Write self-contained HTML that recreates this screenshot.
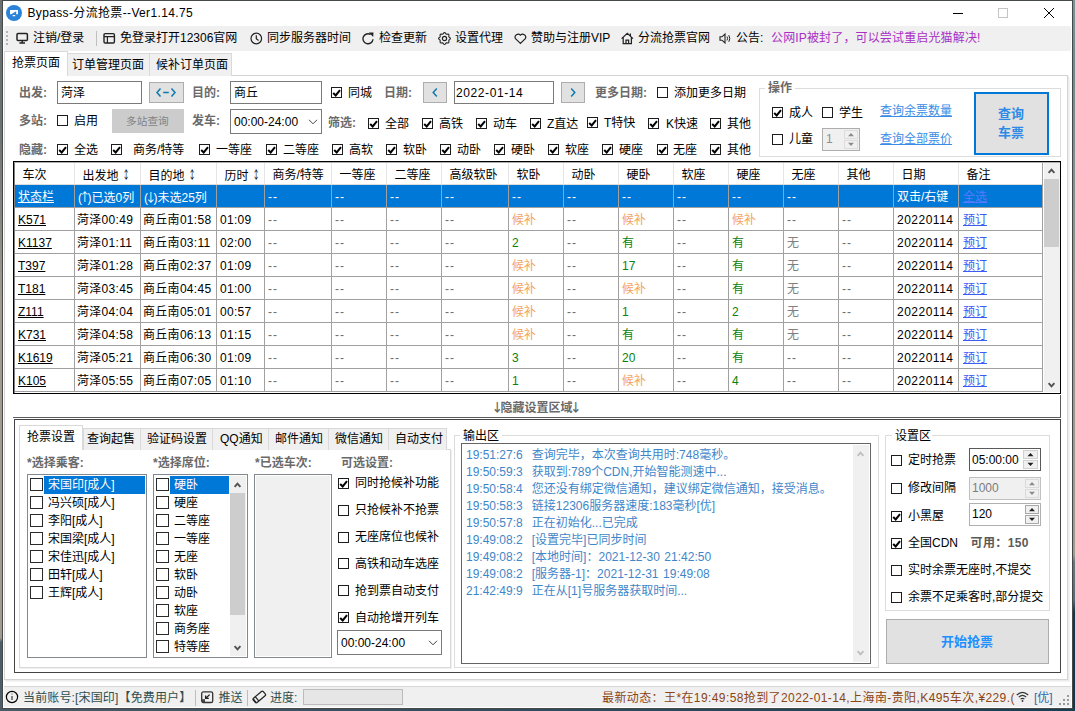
<!DOCTYPE html>
<html lang="zh-CN"><head><meta charset="utf-8"><title>Bypass-分流抢票--Ver1.14.75</title>
<style>
html,body{margin:0;padding:0}
body{width:1075px;height:711px;overflow:hidden;position:relative;font:12px/16px "Liberation Sans","Noto Sans CJK SC",sans-serif;color:#000;background:#4d5e6b}
.a{position:absolute;box-sizing:border-box}
.t{position:absolute;white-space:pre;line-height:16px;height:16px}
.cb{position:absolute;box-sizing:border-box;width:11px;height:11px;border:1px solid #1c1c1c;background:#fff}
.cb .ck{position:absolute;left:-1px;top:-1px}
.g{color:#6a6a6a;font-weight:bold}
.b{font-weight:bold}
.lnk{color:#3c8ce6;text-decoration:underline}
.dd{color:#6d6d6d;letter-spacing:1px}
.lnk2{color:#3c5cf5;text-decoration:underline}
.dt{letter-spacing:0.5px}
.ds{letter-spacing:0.3px}
.or{color:#f4a460}
.gr{color:#0a820a}
.gy{color:#808080}
.w{color:#fff !important}
.cj{font-family:"Noto Sans CJK SC",sans-serif;display:inline-block;width:6.5px;text-indent:-2.75px;overflow:visible}
.log{word-spacing:1.2px}
.st{letter-spacing:0.4px}
.log{color:#3f86c8}
u{text-decoration:underline}
</style></head><body>

<div class="a " style="left:0px;top:0px;width:3px;height:711px;background:linear-gradient(#6c7073 0,#6c7073 120px,#a29a8e 300px,#a29a8e 638px,#4d5e6b 642px,#4d5e6b 711px)"></div>
<div class="a " style="left:1072px;top:0px;width:3px;height:711px;background:linear-gradient(#76969c 0,#6d8a90 60px,#9a958c 300px,#a09a90 555px,#6a7580 562px,#5a6a78 600px,#13374a 612px,#13374a 711px)"></div>
<div class="a " style="left:0px;top:708px;width:1075px;height:3px;background:linear-gradient(90deg,#4a5a66,#173f52)"></div>
<div class="a " style="left:2px;top:0px;width:1071px;height:709px;background:#fff;border:1px solid #45494a"></div>
<svg class="a" style="left:6px;top:5px" width="16" height="16" viewBox="0 0 16 16"><circle cx="8" cy="8" r="8" fill="#2b83d9"/><path d="M4 5 H12 V9.2 H10.2 V6.2 L5.2 9.2 H4 Z M6.7 10 H9.2 V11.3 H6.7 Z" fill="#fff"/></svg>
<div class="t " style="left:27.5px;top:5px;letter-spacing:0.35px">Bypass-分流抢票--Ver1.14.75</div>
<div class="a " style="left:953px;top:13px;width:10px;height:1px;background:#000"></div>
<div class="a " style="left:998px;top:8px;width:10px;height:10px;border:1px solid #c4c4c4"></div>
<svg class="a" style="left:1043px;top:7px" width="12" height="12" viewBox="0 0 12 12"><path d="M1 1 L11 11 M11 1 L1 11" stroke="#000" stroke-width="1" fill="none"/></svg>
<div class="a " style="left:4px;top:26px;width:1067px;height:25px;background:#f0f0f0;border-radius:2px"></div>
<div class="a " style="left:6px;top:31px;width:2px;height:2px;background:#b4b4b4"></div>
<div class="a " style="left:6px;top:35px;width:2px;height:2px;background:#b4b4b4"></div>
<div class="a " style="left:6px;top:39px;width:2px;height:2px;background:#b4b4b4"></div>
<div class="a " style="left:6px;top:43px;width:2px;height:2px;background:#b4b4b4"></div>
<svg class="a" style="left:16px;top:31.5px" width="13" height="13" viewBox="0 0 13 13" fill="none" stroke="#222" stroke-width="1.2"><rect x="1" y="1.6" width="10.4" height="7" rx="1" stroke-width="1.5"/><path d="M6.2 8.6 V10.8 M3.4 11 H9" stroke-width="1.4"/></svg>
<div class="t " style="left:33px;top:30px;">注销/登录</div>
<div class="a " style="left:96px;top:31px;width:1px;height:15px;background:#c0c0c0"></div>
<svg class="a" style="left:103px;top:31.5px" width="13" height="13" viewBox="0 0 13 13" fill="none" stroke="#222" stroke-width="1.2"><rect x="1" y="1.6" width="10.4" height="9.4" rx="1.2" stroke-width="1.4"/><path d="M1 4.6 H11.4 M4.4 4.6 V11" stroke-width="1.2"/></svg>
<div class="t " style="left:120px;top:30px;">免登录打开12306官网</div>
<svg class="a" style="left:250px;top:31.5px" width="13" height="13" viewBox="0 0 13 13" fill="none" stroke="#222" stroke-width="1.2"><circle cx="6.3" cy="6.5" r="5.3"/><path d="M6.3 3.2 V6.7 L8.6 8.4"/></svg>
<div class="t " style="left:267px;top:30px;">同步服务器时间</div>
<svg class="a" style="left:362px;top:31.5px" width="13" height="13" viewBox="0 0 13 13" fill="none" stroke="#222" stroke-width="1.2"><path d="M8.6 2.5 A5 5 0 1 0 10.98 7.2" stroke-width="1.35"/><path d="M6.9 0.4 L11.5 0.4 L11.2 5 Z" fill="#222" stroke="none"/></svg>
<div class="t " style="left:379px;top:30px;">检查更新</div>
<svg class="a" style="left:438px;top:31.5px" width="13" height="13" viewBox="0 0 13 13" fill="none" stroke="#222" stroke-width="1.2"><circle cx="6.5" cy="6.5" r="2.1"/><path d="M12.40 6.50 L12.24 7.00 L11.82 7.44 L11.33 7.79 L10.95 8.12 L10.79 8.50 L10.83 9.00 L10.93 9.60 L10.91 10.20 L10.67 10.67 L10.20 10.91 L9.60 10.93 L9.00 10.83 L8.50 10.79 L8.12 10.95 L7.79 11.33 L7.44 11.82 L7.00 12.24 L6.50 12.40 L6.00 12.24 L5.56 11.82 L5.21 11.33 L4.88 10.95 L4.50 10.79 L4.00 10.83 L3.40 10.93 L2.80 10.91 L2.33 10.67 L2.09 10.20 L2.07 9.60 L2.17 9.00 L2.21 8.50 L2.05 8.12 L1.67 7.79 L1.18 7.44 L0.76 7.00 L0.60 6.50 L0.76 6.00 L1.18 5.56 L1.67 5.21 L2.05 4.88 L2.21 4.50 L2.17 4.00 L2.07 3.40 L2.09 2.80 L2.33 2.33 L2.80 2.09 L3.40 2.07 L4.00 2.17 L4.50 2.21 L4.88 2.05 L5.21 1.67 L5.56 1.18 L6.00 0.76 L6.50 0.60 L7.00 0.76 L7.44 1.18 L7.79 1.67 L8.12 2.05 L8.50 2.21 L9.00 2.17 L9.60 2.07 L10.20 2.09 L10.67 2.33 L10.91 2.80 L10.93 3.40 L10.83 4.00 L10.79 4.50 L10.95 4.88 L11.33 5.21 L11.82 5.56 L12.24 6.00 Z" stroke-width="1.1"/></svg>
<div class="t " style="left:455px;top:30px;">设置代理</div>
<svg class="a" style="left:514px;top:31.5px" width="13" height="13" viewBox="0 0 13 13" fill="none" stroke="#222" stroke-width="1.2"><path d="M6.4 11.4 L1.5 6.6 A3 3 0 0 1 6.4 3.2 A3 3 0 0 1 11.3 6.6 Z"/></svg>
<div class="t " style="left:531px;top:30px;">赞助与注册VIP</div>
<svg class="a" style="left:621px;top:31.5px" width="13" height="13" viewBox="0 0 13 13" fill="none" stroke="#222" stroke-width="1.2"><path d="M0.6 6.6 L6.3 1.3 L12 6.6 M2.2 5.6 V11.6 H10.4 V5.6 M5 11.6 V8 H7.6 V11.6 M9.4 3.8 V1.6" stroke-width="1.25"/></svg>
<div class="t " style="left:638px;top:30px;">分流抢票官网</div>
<svg class="a" style="left:719px;top:31.5px" width="13" height="13" viewBox="0 0 13 13" fill="none" stroke="#222" stroke-width="1.2"><path d="M1 4.8 H3 L6 2 V11 L3 8.2 H1 Z" stroke-width="1.1"/><path d="M8 4.6 Q9.2 6.5 8 8.4 M9.8 3.2 Q11.8 6.5 9.8 9.8" stroke-width="1"/></svg>
<div class="t " style="left:736px;top:30px;">公告:</div>
<div class="t " style="left:771px;top:30px;color:#a82fc4;letter-spacing:0.15px">公网IP被封了，可以尝试重启光猫解决!</div>
<div class="a " style="left:4px;top:75px;width:1064px;height:605px;border:1px solid #d4d4d4;background:#fff;box-shadow:1px 1px 0 #ececec,2px 2px 0 #f4f4f4"></div>
<div class="a " style="left:67px;top:53px;width:83px;height:23px;border:1px solid #d9d9d9;background:#f0f0f0;border-bottom:none"></div>
<div class="a " style="left:149px;top:53px;width:83px;height:23px;border:1px solid #d9d9d9;background:#f0f0f0;border-bottom:none"></div>
<div class="a " style="left:4px;top:51px;width:64px;height:25px;border:1px solid #d9d9d9;background:#fff;border-bottom:none"></div>
<div class="t " style="left:12px;top:55px;">抢票页面</div>
<div class="t " style="left:72px;top:57px;">订单管理页面</div>
<div class="t " style="left:156px;top:57px;">候补订单页面</div>
<div class="t g" style="left:19px;top:85px;">出发:</div>
<div class="a " style="left:57px;top:81px;width:85px;height:23px;border:1px solid #7a7a7a;background:#fff;"></div>
<div class="t " style="left:61px;top:84.5px;">菏泽</div>
<div class="a " style="left:149px;top:82px;width:35px;height:21px;border:1px solid #adadad;background:#e1e1e1"></div>
<svg class="a" style="left:155px;top:87px" width="22" height="11" viewBox="0 0 22 11"><path d="M5.5 1.5 L2 5.5 L5.5 9.5 M8.2 5.5 H13.8 M16.5 1.5 L20 5.5 L16.5 9.5" fill="none" stroke="#0f7ab0" stroke-width="1.5"/></svg>
<div class="t g" style="left:192px;top:85px;">目的:</div>
<div class="a " style="left:230px;top:81px;width:92px;height:23px;border:1px solid #7a7a7a;background:#fff;"></div>
<div class="t " style="left:234px;top:84.5px;">商丘</div>
<div class="cb" style="left:331px;top:87.0px"><svg class="ck" width="11" height="11" viewBox="0 0 11 11"><path d="M2.2 6 L4.7 8.5 L9 3.2" fill="none" stroke="#000" stroke-width="2"/></svg></div>
<div class="t " style="left:348px;top:84.5px;">同城</div>
<div class="t g" style="left:384px;top:85px;">日期:</div>
<div class="a " style="left:423px;top:82px;width:24px;height:21px;border:1px solid #adadad;background:#e1e1e1"></div>
<svg class="a" style="left:431px;top:87px" width="8" height="11" viewBox="0 0 8 11"><path d="M5.8 1.5 L2.2 5.5 L5.8 9.5" fill="none" stroke="#0f7ab0" stroke-width="1.5"/></svg>
<div class="a " style="left:454px;top:81px;width:100px;height:23px;border:1px solid #7a7a7a;background:#fff;"></div>
<div class="t " style="left:458px;top:84.5px;letter-spacing:0.6px;margin-left:-2px">2022-01-14</div>
<div class="a " style="left:561px;top:82px;width:24px;height:21px;border:1px solid #adadad;background:#e1e1e1"></div>
<svg class="a" style="left:569px;top:87px" width="8" height="11" viewBox="0 0 8 11"><path d="M2.2 1.5 L5.8 5.5 L2.2 9.5" fill="none" stroke="#0f7ab0" stroke-width="1.5"/></svg>
<div class="t g" style="left:595px;top:85px;">更多日期:</div>
<div class="cb" style="left:657px;top:87.0px"></div>
<div class="t " style="left:674px;top:84.5px;">添加更多日期</div>
<div class="t g" style="left:19px;top:112.5px;">多站:</div>
<div class="cb" style="left:57px;top:115.0px"></div>
<div class="t " style="left:74px;top:112.5px;">启用</div>
<div class="a " style="left:112px;top:109px;width:72px;height:24px;background:#cccccc"></div>
<div class="t " style="left:126px;top:113px;color:#838383;font-size:10.7px">多站查询</div>
<div class="t g" style="left:192px;top:113px;">发车:</div>
<div class="a " style="left:230px;top:109px;width:92px;height:25px;border:1px solid #7a7a7a;background:#fff;"></div>
<div class="t " style="left:234px;top:113.5px;">00:00-24:00</div>
<svg class="a" style="left:308px;top:119px" width="10" height="6" viewBox="0 0 10 6"><path d="M1 0.8 L5 4.8 L9 0.8" fill="none" stroke="#444" stroke-width="1"/></svg>
<div class="t g" style="left:328px;top:115px;">筛选:</div>
<div class="cb" style="left:368px;top:118.0px"><svg class="ck" width="11" height="11" viewBox="0 0 11 11"><path d="M2.2 6 L4.7 8.5 L9 3.2" fill="none" stroke="#000" stroke-width="2"/></svg></div>
<div class="t " style="left:385px;top:115.5px;">全部</div>
<div class="cb" style="left:422px;top:118.0px"><svg class="ck" width="11" height="11" viewBox="0 0 11 11"><path d="M2.2 6 L4.7 8.5 L9 3.2" fill="none" stroke="#000" stroke-width="2"/></svg></div>
<div class="t " style="left:439px;top:115.5px;">高铁</div>
<div class="cb" style="left:476px;top:118.0px"><svg class="ck" width="11" height="11" viewBox="0 0 11 11"><path d="M2.2 6 L4.7 8.5 L9 3.2" fill="none" stroke="#000" stroke-width="2"/></svg></div>
<div class="t " style="left:493px;top:115.5px;">动车</div>
<div class="cb" style="left:530px;top:118.0px"><svg class="ck" width="11" height="11" viewBox="0 0 11 11"><path d="M2.2 6 L4.7 8.5 L9 3.2" fill="none" stroke="#000" stroke-width="2"/></svg></div>
<div class="t " style="left:547px;top:115.5px;">Z直达</div>
<div class="cb" style="left:587px;top:117.0px"><svg class="ck" width="11" height="11" viewBox="0 0 11 11"><path d="M2.2 6 L4.7 8.5 L9 3.2" fill="none" stroke="#000" stroke-width="2"/></svg></div>
<div class="t " style="left:604px;top:114.5px;">T特快</div>
<div class="cb" style="left:648px;top:118.0px"><svg class="ck" width="11" height="11" viewBox="0 0 11 11"><path d="M2.2 6 L4.7 8.5 L9 3.2" fill="none" stroke="#000" stroke-width="2"/></svg></div>
<div class="t " style="left:666px;top:115.5px;">K快速</div>
<div class="cb" style="left:710px;top:118.0px"><svg class="ck" width="11" height="11" viewBox="0 0 11 11"><path d="M2.2 6 L4.7 8.5 L9 3.2" fill="none" stroke="#000" stroke-width="2"/></svg></div>
<div class="t " style="left:727px;top:115.5px;">其他</div>
<div class="t g" style="left:19px;top:141.5px;">隐藏:</div>
<div class="cb" style="left:57px;top:144.0px"><svg class="ck" width="11" height="11" viewBox="0 0 11 11"><path d="M2.2 6 L4.7 8.5 L9 3.2" fill="none" stroke="#000" stroke-width="2"/></svg></div>
<div class="t " style="left:74px;top:141.5px;">全选</div>
<div class="cb" style="left:111px;top:144.0px"><svg class="ck" width="11" height="11" viewBox="0 0 11 11"><path d="M2.2 6 L4.7 8.5 L9 3.2" fill="none" stroke="#000" stroke-width="2"/></svg></div>
<div class="t " style="left:133px;top:141.5px;">商务/特等</div>
<div class="cb" style="left:199px;top:144.0px"><svg class="ck" width="11" height="11" viewBox="0 0 11 11"><path d="M2.2 6 L4.7 8.5 L9 3.2" fill="none" stroke="#000" stroke-width="2"/></svg></div>
<div class="t " style="left:216px;top:141.5px;">一等座</div>
<div class="cb" style="left:266px;top:144.0px"><svg class="ck" width="11" height="11" viewBox="0 0 11 11"><path d="M2.2 6 L4.7 8.5 L9 3.2" fill="none" stroke="#000" stroke-width="2"/></svg></div>
<div class="t " style="left:283px;top:141.5px;">二等座</div>
<div class="cb" style="left:332px;top:144.0px"><svg class="ck" width="11" height="11" viewBox="0 0 11 11"><path d="M2.2 6 L4.7 8.5 L9 3.2" fill="none" stroke="#000" stroke-width="2"/></svg></div>
<div class="t " style="left:349px;top:141.5px;">高软</div>
<div class="cb" style="left:386px;top:144.0px"><svg class="ck" width="11" height="11" viewBox="0 0 11 11"><path d="M2.2 6 L4.7 8.5 L9 3.2" fill="none" stroke="#000" stroke-width="2"/></svg></div>
<div class="t " style="left:403px;top:141.5px;">软卧</div>
<div class="cb" style="left:440px;top:144.0px"><svg class="ck" width="11" height="11" viewBox="0 0 11 11"><path d="M2.2 6 L4.7 8.5 L9 3.2" fill="none" stroke="#000" stroke-width="2"/></svg></div>
<div class="t " style="left:457px;top:141.5px;">动卧</div>
<div class="cb" style="left:494px;top:144.0px"><svg class="ck" width="11" height="11" viewBox="0 0 11 11"><path d="M2.2 6 L4.7 8.5 L9 3.2" fill="none" stroke="#000" stroke-width="2"/></svg></div>
<div class="t " style="left:511px;top:141.5px;">硬卧</div>
<div class="cb" style="left:548px;top:144.0px"><svg class="ck" width="11" height="11" viewBox="0 0 11 11"><path d="M2.2 6 L4.7 8.5 L9 3.2" fill="none" stroke="#000" stroke-width="2"/></svg></div>
<div class="t " style="left:565px;top:141.5px;">软座</div>
<div class="cb" style="left:602px;top:144.0px"><svg class="ck" width="11" height="11" viewBox="0 0 11 11"><path d="M2.2 6 L4.7 8.5 L9 3.2" fill="none" stroke="#000" stroke-width="2"/></svg></div>
<div class="t " style="left:619px;top:141.5px;">硬座</div>
<div class="cb" style="left:657px;top:144.0px"><svg class="ck" width="11" height="11" viewBox="0 0 11 11"><path d="M2.2 6 L4.7 8.5 L9 3.2" fill="none" stroke="#000" stroke-width="2"/></svg></div>
<div class="t " style="left:673px;top:141.5px;">无座</div>
<div class="cb" style="left:710px;top:144.0px"><svg class="ck" width="11" height="11" viewBox="0 0 11 11"><path d="M2.2 6 L4.7 8.5 L9 3.2" fill="none" stroke="#000" stroke-width="2"/></svg></div>
<div class="t " style="left:727px;top:141.5px;">其他</div>
<div class="a " style="left:759px;top:88px;width:302px;height:69px;border:1px solid #dcdcdc"></div>
<div class="a " style="left:765px;top:80px;width:30px;height:16px;background:#fff"></div>
<div class="t g b" style="left:768px;top:80px;">操作</div>
<div class="cb" style="left:772px;top:107.0px"><svg class="ck" width="11" height="11" viewBox="0 0 11 11"><path d="M2.2 6 L4.7 8.5 L9 3.2" fill="none" stroke="#000" stroke-width="2"/></svg></div>
<div class="t " style="left:789px;top:104.5px;">成人</div>
<div class="cb" style="left:822px;top:107.0px"></div>
<div class="t " style="left:839px;top:104.5px;">学生</div>
<div class="t lnk" style="left:880px;top:103px;">查询余票数量</div>
<div class="cb" style="left:772px;top:133.5px"></div>
<div class="t " style="left:789px;top:131px;">儿童</div>
<div class="a " style="left:822px;top:128px;width:38px;height:23px;border:1px solid #adadad;background:#f0f0f0"></div>
<div class="t " style="left:826px;top:131px;color:#8f8f8f">1</div>
<svg class="a" style="left:844px;top:130px" width="14" height="19" viewBox="0 0 14 19"><rect x="0.5" y="0.5" width="13" height="8" fill="#f0f0f0" stroke="#dcdcdc"/><rect x="0.5" y="10.5" width="13" height="8" fill="#f0f0f0" stroke="#dcdcdc"/><path d="M4.0 6.3 L7.0 3 L10.0 6.3 Z M4.0 12.7 L7.0 16 L10.0 12.7 Z" fill="#8c8c8c"/></svg>
<div class="t lnk" style="left:880px;top:131px;">查询全部票价</div>
<div class="a " style="left:974px;top:92px;width:75px;height:63px;border:2px solid #0078d7;background:#e1e1e1"></div>
<div class="t b" style="left:998px;top:106px;color:#2e8ae6;font-size:13px">查询</div>
<div class="t b" style="left:998px;top:125px;color:#2e8ae6;font-size:13px">车票</div>
<div class="a " style="left:13px;top:161px;width:1048px;height:233px;border:1px solid #000;background:#fff"></div>
<div class="a " style="left:14px;top:162px;width:1046px;height:231px;border-left:1px solid #808080;border-top:1px solid #b0b0b0"></div>
<div class="a " style="left:15px;top:185px;width:1028px;height:22px;background:#0078d7"></div>
<div class="a " style="left:15px;top:184px;width:1028px;height:1px;background:#dcdcdc"></div>
<div class="a " style="left:15px;top:207px;width:1028px;height:1px;background:#a0a0a0"></div>
<div class="a " style="left:15px;top:230px;width:1028px;height:1px;background:#a0a0a0"></div>
<div class="a " style="left:15px;top:253px;width:1028px;height:1px;background:#a0a0a0"></div>
<div class="a " style="left:15px;top:276px;width:1028px;height:1px;background:#a0a0a0"></div>
<div class="a " style="left:15px;top:299px;width:1028px;height:1px;background:#a0a0a0"></div>
<div class="a " style="left:15px;top:322px;width:1028px;height:1px;background:#a0a0a0"></div>
<div class="a " style="left:15px;top:345px;width:1028px;height:1px;background:#a0a0a0"></div>
<div class="a " style="left:15px;top:368px;width:1028px;height:1px;background:#a0a0a0"></div>
<div class="a " style="left:15px;top:391px;width:1028px;height:1px;background:#a0a0a0"></div>
<div class="a " style="left:74px;top:163px;width:1px;height:21px;background:#e5e5e5"></div>
<div class="a " style="left:74px;top:185px;width:1px;height:207px;background:#a0a0a0"></div>
<div class="a " style="left:140px;top:163px;width:1px;height:21px;background:#e5e5e5"></div>
<div class="a " style="left:140px;top:185px;width:1px;height:207px;background:#a0a0a0"></div>
<div class="a " style="left:216px;top:163px;width:1px;height:21px;background:#e5e5e5"></div>
<div class="a " style="left:216px;top:185px;width:1px;height:207px;background:#a0a0a0"></div>
<div class="a " style="left:264px;top:163px;width:1px;height:21px;background:#e5e5e5"></div>
<div class="a " style="left:264px;top:185px;width:1px;height:207px;background:#a0a0a0"></div>
<div class="a " style="left:331px;top:163px;width:1px;height:21px;background:#e5e5e5"></div>
<div class="a " style="left:331px;top:185px;width:1px;height:207px;background:#a0a0a0"></div>
<div class="a " style="left:386px;top:163px;width:1px;height:21px;background:#e5e5e5"></div>
<div class="a " style="left:386px;top:185px;width:1px;height:207px;background:#a0a0a0"></div>
<div class="a " style="left:441px;top:163px;width:1px;height:21px;background:#e5e5e5"></div>
<div class="a " style="left:441px;top:185px;width:1px;height:207px;background:#a0a0a0"></div>
<div class="a " style="left:508px;top:163px;width:1px;height:21px;background:#e5e5e5"></div>
<div class="a " style="left:508px;top:185px;width:1px;height:207px;background:#a0a0a0"></div>
<div class="a " style="left:563px;top:163px;width:1px;height:21px;background:#e5e5e5"></div>
<div class="a " style="left:563px;top:185px;width:1px;height:207px;background:#a0a0a0"></div>
<div class="a " style="left:618px;top:163px;width:1px;height:21px;background:#e5e5e5"></div>
<div class="a " style="left:618px;top:185px;width:1px;height:207px;background:#a0a0a0"></div>
<div class="a " style="left:673px;top:163px;width:1px;height:21px;background:#e5e5e5"></div>
<div class="a " style="left:673px;top:185px;width:1px;height:207px;background:#a0a0a0"></div>
<div class="a " style="left:728px;top:163px;width:1px;height:21px;background:#e5e5e5"></div>
<div class="a " style="left:728px;top:185px;width:1px;height:207px;background:#a0a0a0"></div>
<div class="a " style="left:783px;top:163px;width:1px;height:21px;background:#e5e5e5"></div>
<div class="a " style="left:783px;top:185px;width:1px;height:207px;background:#a0a0a0"></div>
<div class="a " style="left:838px;top:163px;width:1px;height:21px;background:#e5e5e5"></div>
<div class="a " style="left:838px;top:185px;width:1px;height:207px;background:#a0a0a0"></div>
<div class="a " style="left:893px;top:163px;width:1px;height:21px;background:#e5e5e5"></div>
<div class="a " style="left:893px;top:185px;width:1px;height:207px;background:#a0a0a0"></div>
<div class="a " style="left:958px;top:163px;width:1px;height:21px;background:#e5e5e5"></div>
<div class="a " style="left:958px;top:185px;width:1px;height:207px;background:#a0a0a0"></div>
<div class="a " style="left:1042px;top:163px;width:1px;height:229px;background:#a0a0a0"></div>
<div class="t " style="left:22.5px;top:167px;">车次</div>
<div class="t " style="left:82.5px;top:167px;">出发地 <span class="cj" style="margin-left:1px;transform:scaleX(.65)">↕</span></div>
<div class="t " style="left:148.5px;top:167px;">目的地 <span class="cj" style="margin-left:1px;transform:scaleX(.65)">↕</span></div>
<div class="t " style="left:224.5px;top:167px;">历时 <span class="cj" style="margin-left:1px;transform:scaleX(.65)">↕</span></div>
<div class="t " style="left:272.5px;top:167px;">商务/特等</div>
<div class="t " style="left:339.5px;top:167px;">一等座</div>
<div class="t " style="left:394.5px;top:167px;">二等座</div>
<div class="t " style="left:449.5px;top:167px;">高级软卧</div>
<div class="t " style="left:516.5px;top:167px;">软卧</div>
<div class="t " style="left:571.5px;top:167px;">动卧</div>
<div class="t " style="left:626.5px;top:167px;">硬卧</div>
<div class="t " style="left:681.5px;top:167px;">软座</div>
<div class="t " style="left:736.5px;top:167px;">硬座</div>
<div class="t " style="left:791.5px;top:167px;">无座</div>
<div class="t " style="left:846.5px;top:167px;">其他</div>
<div class="t " style="left:901.5px;top:167px;">日期</div>
<div class="t " style="left:966.5px;top:167px;">备注</div>
<div class="t w" style="left:18px;top:189px;"><u>状态栏</u></div>
<div class="t w" style="left:78px;top:189px;">(<span class="cj" style="width:5.5px;text-indent:-3.25px">↑</span>)已选0列</div>
<div class="t w" style="left:144px;top:189px;">(<span class="cj" style="width:5.5px;text-indent:-3.25px">↓</span>)未选25列</div>
<div class="t w dd" style="left:268px;top:189px;">--</div>
<div class="t w dd" style="left:335px;top:189px;">--</div>
<div class="t w dd" style="left:390px;top:189px;">--</div>
<div class="t w dd" style="left:445px;top:189px;">--</div>
<div class="t w dd" style="left:512px;top:189px;">--</div>
<div class="t w dd" style="left:567px;top:189px;">--</div>
<div class="t w dd" style="left:622px;top:189px;">--</div>
<div class="t w dd" style="left:677px;top:189px;">--</div>
<div class="t w dd" style="left:732px;top:189px;">--</div>
<div class="t w dd" style="left:787px;top:189px;">--</div>
<div class="t w" style="left:897px;top:189px;">双击/右键</div>
<div class="t w" style="left:963px;top:189px;"><span style="color:#5a78ff;text-decoration:underline">全选</span></div>
<div class="t " style="left:18px;top:212px;"><u>K571</u></div>
<div class="t ds" style="left:77px;top:212px;">菏泽00:49</div>
<div class="t ds" style="left:143px;top:212px;">商丘南01:58</div>
<div class="t ds" style="left:220px;top:212px;">01:09</div>
<div class="t dd" style="left:268px;top:212px;">--</div>
<div class="t dd" style="left:335px;top:212px;">--</div>
<div class="t dd" style="left:390px;top:212px;">--</div>
<div class="t dd" style="left:445px;top:212px;">--</div>
<div class="t or" style="left:512px;top:212px;">候补</div>
<div class="t dd" style="left:567px;top:212px;">--</div>
<div class="t or" style="left:622px;top:212px;">候补</div>
<div class="t dd" style="left:677px;top:212px;">--</div>
<div class="t or" style="left:732px;top:212px;">候补</div>
<div class="t dd" style="left:787px;top:212px;">--</div>
<div class="t dd" style="left:842px;top:212px;">--</div>
<div class="t dt" style="left:897px;top:212px;">20220114</div>
<div class="t lnk2" style="left:963px;top:212px;">预订</div>
<div class="t " style="left:18px;top:235px;"><u>K1137</u></div>
<div class="t ds" style="left:77px;top:235px;">菏泽01:11</div>
<div class="t ds" style="left:143px;top:235px;">商丘南03:11</div>
<div class="t ds" style="left:220px;top:235px;">02:00</div>
<div class="t dd" style="left:268px;top:235px;">--</div>
<div class="t dd" style="left:335px;top:235px;">--</div>
<div class="t dd" style="left:390px;top:235px;">--</div>
<div class="t dd" style="left:445px;top:235px;">--</div>
<div class="t gr" style="left:512px;top:235px;">2</div>
<div class="t dd" style="left:567px;top:235px;">--</div>
<div class="t gr" style="left:622px;top:235px;">有</div>
<div class="t dd" style="left:677px;top:235px;">--</div>
<div class="t gr" style="left:732px;top:235px;">有</div>
<div class="t gy" style="left:787px;top:235px;">无</div>
<div class="t dd" style="left:842px;top:235px;">--</div>
<div class="t dt" style="left:897px;top:235px;">20220114</div>
<div class="t lnk2" style="left:963px;top:235px;">预订</div>
<div class="t " style="left:18px;top:258px;"><u>T397</u></div>
<div class="t ds" style="left:77px;top:258px;">菏泽01:28</div>
<div class="t ds" style="left:143px;top:258px;">商丘南02:37</div>
<div class="t ds" style="left:220px;top:258px;">01:09</div>
<div class="t dd" style="left:268px;top:258px;">--</div>
<div class="t dd" style="left:335px;top:258px;">--</div>
<div class="t dd" style="left:390px;top:258px;">--</div>
<div class="t dd" style="left:445px;top:258px;">--</div>
<div class="t or" style="left:512px;top:258px;">候补</div>
<div class="t dd" style="left:567px;top:258px;">--</div>
<div class="t gr" style="left:622px;top:258px;">17</div>
<div class="t dd" style="left:677px;top:258px;">--</div>
<div class="t gr" style="left:732px;top:258px;">有</div>
<div class="t gy" style="left:787px;top:258px;">无</div>
<div class="t dd" style="left:842px;top:258px;">--</div>
<div class="t dt" style="left:897px;top:258px;">20220114</div>
<div class="t lnk2" style="left:963px;top:258px;">预订</div>
<div class="t " style="left:18px;top:281px;"><u>T181</u></div>
<div class="t ds" style="left:77px;top:281px;">菏泽03:45</div>
<div class="t ds" style="left:143px;top:281px;">商丘南04:45</div>
<div class="t ds" style="left:220px;top:281px;">01:00</div>
<div class="t dd" style="left:268px;top:281px;">--</div>
<div class="t dd" style="left:335px;top:281px;">--</div>
<div class="t dd" style="left:390px;top:281px;">--</div>
<div class="t dd" style="left:445px;top:281px;">--</div>
<div class="t or" style="left:512px;top:281px;">候补</div>
<div class="t dd" style="left:567px;top:281px;">--</div>
<div class="t or" style="left:622px;top:281px;">候补</div>
<div class="t dd" style="left:677px;top:281px;">--</div>
<div class="t gr" style="left:732px;top:281px;">有</div>
<div class="t gy" style="left:787px;top:281px;">无</div>
<div class="t dd" style="left:842px;top:281px;">--</div>
<div class="t dt" style="left:897px;top:281px;">20220114</div>
<div class="t lnk2" style="left:963px;top:281px;">预订</div>
<div class="t " style="left:18px;top:304px;"><u>Z111</u></div>
<div class="t ds" style="left:77px;top:304px;">菏泽04:04</div>
<div class="t ds" style="left:143px;top:304px;">商丘南05:01</div>
<div class="t ds" style="left:220px;top:304px;">00:57</div>
<div class="t dd" style="left:268px;top:304px;">--</div>
<div class="t dd" style="left:335px;top:304px;">--</div>
<div class="t dd" style="left:390px;top:304px;">--</div>
<div class="t dd" style="left:445px;top:304px;">--</div>
<div class="t or" style="left:512px;top:304px;">候补</div>
<div class="t dd" style="left:567px;top:304px;">--</div>
<div class="t gr" style="left:622px;top:304px;">1</div>
<div class="t dd" style="left:677px;top:304px;">--</div>
<div class="t gr" style="left:732px;top:304px;">2</div>
<div class="t gy" style="left:787px;top:304px;">无</div>
<div class="t dd" style="left:842px;top:304px;">--</div>
<div class="t dt" style="left:897px;top:304px;">20220114</div>
<div class="t lnk2" style="left:963px;top:304px;">预订</div>
<div class="t " style="left:18px;top:327px;"><u>K731</u></div>
<div class="t ds" style="left:77px;top:327px;">菏泽04:58</div>
<div class="t ds" style="left:143px;top:327px;">商丘南06:13</div>
<div class="t ds" style="left:220px;top:327px;">01:15</div>
<div class="t dd" style="left:268px;top:327px;">--</div>
<div class="t dd" style="left:335px;top:327px;">--</div>
<div class="t dd" style="left:390px;top:327px;">--</div>
<div class="t dd" style="left:445px;top:327px;">--</div>
<div class="t or" style="left:512px;top:327px;">候补</div>
<div class="t dd" style="left:567px;top:327px;">--</div>
<div class="t gr" style="left:622px;top:327px;">有</div>
<div class="t dd" style="left:677px;top:327px;">--</div>
<div class="t gr" style="left:732px;top:327px;">有</div>
<div class="t gy" style="left:787px;top:327px;">无</div>
<div class="t dd" style="left:842px;top:327px;">--</div>
<div class="t dt" style="left:897px;top:327px;">20220114</div>
<div class="t lnk2" style="left:963px;top:327px;">预订</div>
<div class="t " style="left:18px;top:350px;"><u>K1619</u></div>
<div class="t ds" style="left:77px;top:350px;">菏泽05:21</div>
<div class="t ds" style="left:143px;top:350px;">商丘南06:30</div>
<div class="t ds" style="left:220px;top:350px;">01:09</div>
<div class="t dd" style="left:268px;top:350px;">--</div>
<div class="t dd" style="left:335px;top:350px;">--</div>
<div class="t dd" style="left:390px;top:350px;">--</div>
<div class="t dd" style="left:445px;top:350px;">--</div>
<div class="t gr" style="left:512px;top:350px;">3</div>
<div class="t dd" style="left:567px;top:350px;">--</div>
<div class="t gr" style="left:622px;top:350px;">20</div>
<div class="t dd" style="left:677px;top:350px;">--</div>
<div class="t gr" style="left:732px;top:350px;">有</div>
<div class="t dd" style="left:787px;top:350px;">--</div>
<div class="t dd" style="left:842px;top:350px;">--</div>
<div class="t dt" style="left:897px;top:350px;">20220114</div>
<div class="t lnk2" style="left:963px;top:350px;">预订</div>
<div class="t " style="left:18px;top:373px;"><u>K105</u></div>
<div class="t ds" style="left:77px;top:373px;">菏泽05:55</div>
<div class="t ds" style="left:143px;top:373px;">商丘南07:05</div>
<div class="t ds" style="left:220px;top:373px;">01:10</div>
<div class="t dd" style="left:268px;top:373px;">--</div>
<div class="t dd" style="left:335px;top:373px;">--</div>
<div class="t dd" style="left:390px;top:373px;">--</div>
<div class="t dd" style="left:445px;top:373px;">--</div>
<div class="t gr" style="left:512px;top:373px;">1</div>
<div class="t dd" style="left:567px;top:373px;">--</div>
<div class="t or" style="left:622px;top:373px;">候补</div>
<div class="t dd" style="left:677px;top:373px;">--</div>
<div class="t gr" style="left:732px;top:373px;">4</div>
<div class="t dd" style="left:787px;top:373px;">--</div>
<div class="t dd" style="left:842px;top:373px;">--</div>
<div class="t dt" style="left:897px;top:373px;">20220114</div>
<div class="t lnk2" style="left:963px;top:373px;">预订</div>
<div class="a " style="left:1043px;top:163px;width:17px;height:230px;background:#fff"></div>
<div class="a " style="left:1044px;top:163px;width:16px;height:229px;background:#f0f0f0"></div>
<div class="a " style="left:1044px;top:179px;width:15px;height:68px;background:#cdcdcd"></div>
<svg class="a" style="left:1047px;top:168px" width="9" height="6" viewBox="0 0 9 6"><path d="M1.6 4.8 L4.5 1.7 L7.4 4.8" fill="none" stroke="#505050" stroke-width="1.9"/></svg>
<svg class="a" style="left:1047px;top:382px" width="9" height="6" viewBox="0 0 9 6"><path d="M1.6 1.2 L4.5 4.3 L7.4 1.2" fill="none" stroke="#505050" stroke-width="1.9"/></svg>
<div class="t g" style="left:494px;top:399px;"><span class="cj">↓</span>隐藏设置区域<span class="cj">↓</span></div>
<div class="a " style="left:13px;top:417px;width:1048px;height:1px;background:#5a5a5a"></div>
<div class="a " style="left:1060px;top:395px;width:1px;height:23px;background:#5a5a5a"></div>
<div class="a " style="left:14px;top:419px;width:1047px;height:254px;border:1px solid #444;background:#fff"></div>
<div class="a " style="left:19px;top:449px;width:432px;height:219px;border:1px solid #d9d9d9;background:#fff;box-shadow:1px 1px 0 #f0f0f0"></div>
<div class="a " style="left:83px;top:428px;width:59px;height:22px;border:1px solid #d9d9d9;background:#f0f0f0;border-bottom:none"></div>
<div class="t " style="left:87px;top:431px;">查询起售</div>
<div class="a " style="left:140px;top:428px;width:74px;height:22px;border:1px solid #d9d9d9;background:#f0f0f0;border-bottom:none"></div>
<div class="t " style="left:147px;top:431px;">验证码设置</div>
<div class="a " style="left:212px;top:428px;width:58px;height:22px;border:1px solid #d9d9d9;background:#f0f0f0;border-bottom:none"></div>
<div class="t " style="left:220px;top:431px;">QQ通知</div>
<div class="a " style="left:268px;top:428px;width:62px;height:22px;border:1px solid #d9d9d9;background:#f0f0f0;border-bottom:none"></div>
<div class="t " style="left:275px;top:431px;">邮件通知</div>
<div class="a " style="left:328px;top:428px;width:62px;height:22px;border:1px solid #d9d9d9;background:#f0f0f0;border-bottom:none"></div>
<div class="t " style="left:335px;top:431px;">微信通知</div>
<div class="a " style="left:388px;top:428px;width:59px;height:22px;border:1px solid #d9d9d9;background:#f0f0f0;border-bottom:none"></div>
<div class="t " style="left:395px;top:431px;">自动支付</div>
<div class="a " style="left:19px;top:425px;width:64px;height:25px;border:1px solid #d9d9d9;background:#fff;border-bottom:none"></div>
<div class="t " style="left:27px;top:429px;">抢票设置</div>
<div class="t g" style="left:27px;top:455px;">*选择乘客:</div>
<div class="t g" style="left:153px;top:455px;">*选择席位:</div>
<div class="t g" style="left:255px;top:455px;">*已选车次:</div>
<div class="t g" style="left:341px;top:455px;">可选设置:</div>
<div class="a " style="left:27px;top:474px;width:120px;height:184px;border:1px solid #828790;background:#fff"></div>
<div class="a " style="left:44px;top:476px;width:101px;height:18px;background:#0078d7"></div>
<div class="a " style="left:30px;top:478px;width:13px;height:13px;border:1px solid #2a2a2a;background:#fff"></div>
<div class="t w" style="left:48px;top:477px;">宋国印[成人]</div>
<div class="a " style="left:30px;top:496px;width:13px;height:13px;border:1px solid #2a2a2a;background:#fff"></div>
<div class="t " style="left:48px;top:495px;">冯兴硕[成人]</div>
<div class="a " style="left:30px;top:514px;width:13px;height:13px;border:1px solid #2a2a2a;background:#fff"></div>
<div class="t " style="left:48px;top:513px;">李阳[成人]</div>
<div class="a " style="left:30px;top:532px;width:13px;height:13px;border:1px solid #2a2a2a;background:#fff"></div>
<div class="t " style="left:48px;top:531px;">宋国梁[成人]</div>
<div class="a " style="left:30px;top:550px;width:13px;height:13px;border:1px solid #2a2a2a;background:#fff"></div>
<div class="t " style="left:48px;top:549px;">宋佳迅[成人]</div>
<div class="a " style="left:30px;top:568px;width:13px;height:13px;border:1px solid #2a2a2a;background:#fff"></div>
<div class="t " style="left:48px;top:567px;">田轩[成人]</div>
<div class="a " style="left:30px;top:586px;width:13px;height:13px;border:1px solid #2a2a2a;background:#fff"></div>
<div class="t " style="left:48px;top:585px;">王辉[成人]</div>
<div class="a " style="left:153px;top:474px;width:95px;height:184px;border:1px solid #828790;background:#fff"></div>
<div class="a " style="left:170px;top:476px;width:59px;height:18px;background:#0078d7"></div>
<div class="a " style="left:156px;top:478px;width:13px;height:13px;border:1px solid #2a2a2a;background:#fff"></div>
<div class="t w" style="left:174px;top:477px;">硬卧</div>
<div class="a " style="left:156px;top:496px;width:13px;height:13px;border:1px solid #2a2a2a;background:#fff"></div>
<div class="t " style="left:174px;top:495px;">硬座</div>
<div class="a " style="left:156px;top:514px;width:13px;height:13px;border:1px solid #2a2a2a;background:#fff"></div>
<div class="t " style="left:174px;top:513px;">二等座</div>
<div class="a " style="left:156px;top:532px;width:13px;height:13px;border:1px solid #2a2a2a;background:#fff"></div>
<div class="t " style="left:174px;top:531px;">一等座</div>
<div class="a " style="left:156px;top:550px;width:13px;height:13px;border:1px solid #2a2a2a;background:#fff"></div>
<div class="t " style="left:174px;top:549px;">无座</div>
<div class="a " style="left:156px;top:568px;width:13px;height:13px;border:1px solid #2a2a2a;background:#fff"></div>
<div class="t " style="left:174px;top:567px;">软卧</div>
<div class="a " style="left:156px;top:586px;width:13px;height:13px;border:1px solid #2a2a2a;background:#fff"></div>
<div class="t " style="left:174px;top:585px;">动卧</div>
<div class="a " style="left:156px;top:604px;width:13px;height:13px;border:1px solid #2a2a2a;background:#fff"></div>
<div class="t " style="left:174px;top:603px;">软座</div>
<div class="a " style="left:156px;top:622px;width:13px;height:13px;border:1px solid #2a2a2a;background:#fff"></div>
<div class="t " style="left:174px;top:621px;">商务座</div>
<div class="a " style="left:156px;top:640px;width:13px;height:13px;border:1px solid #2a2a2a;background:#fff"></div>
<div class="t " style="left:174px;top:639px;">特等座</div>
<div class="a " style="left:230px;top:476px;width:16px;height:180px;background:#f0f0f0"></div>
<div class="a " style="left:230px;top:493px;width:15px;height:122px;background:#cdcdcd"></div>
<svg class="a" style="left:233px;top:482px" width="9" height="6" viewBox="0 0 9 6"><path d="M1.6 4.8 L4.5 1.7 L7.4 4.8" fill="none" stroke="#505050" stroke-width="1.9"/></svg>
<svg class="a" style="left:233px;top:645px" width="9" height="6" viewBox="0 0 9 6"><path d="M1.6 1.2 L4.5 4.3 L7.4 1.2" fill="none" stroke="#505050" stroke-width="1.9"/></svg>
<div class="a " style="left:254px;top:474px;width:78px;height:184px;border:1px solid #828790;background:#f0f0f0;box-shadow:inset 0 0 0 1px #fff"></div>
<div class="cb" style="left:338px;top:477.5px"><svg class="ck" width="11" height="11" viewBox="0 0 11 11"><path d="M2.2 6 L4.7 8.5 L9 3.2" fill="none" stroke="#000" stroke-width="2"/></svg></div>
<div class="t " style="left:355px;top:475px;">同时抢候补功能</div>
<div class="cb" style="left:338px;top:504.5px"></div>
<div class="t " style="left:355px;top:502px;">只抢候补不抢票</div>
<div class="cb" style="left:338px;top:531.5px"></div>
<div class="t " style="left:355px;top:529px;">无座席位也候补</div>
<div class="cb" style="left:338px;top:558.0px"></div>
<div class="t " style="left:355px;top:555.5px;">高铁和动车选座</div>
<div class="cb" style="left:338px;top:585.0px"></div>
<div class="t " style="left:355px;top:582.5px;">抢到票自动支付</div>
<div class="cb" style="left:338px;top:612.0px"><svg class="ck" width="11" height="11" viewBox="0 0 11 11"><path d="M2.2 6 L4.7 8.5 L9 3.2" fill="none" stroke="#000" stroke-width="2"/></svg></div>
<div class="t " style="left:355px;top:609.5px;">自动抢增开列车</div>
<div class="a " style="left:337px;top:630px;width:105px;height:25px;border:1px solid #7a7a7a;background:#fff;"></div>
<div class="t " style="left:341px;top:634.5px;">00:00-24:00</div>
<svg class="a" style="left:428px;top:640px" width="10" height="6" viewBox="0 0 10 6"><path d="M1 0.8 L5 4.8 L9 0.8" fill="none" stroke="#444" stroke-width="1"/></svg>
<div class="a " style="left:454px;top:435px;width:425px;height:233px;border:1px solid #dcdcdc"></div>
<div class="a " style="left:460px;top:428px;width:42px;height:16px;background:#fff"></div>
<div class="t " style="left:463px;top:428px;">输出区</div>
<div class="a " style="left:461px;top:443px;width:410px;height:221px;border:1px solid #646464;background:#fff"></div>
<div class="t log" style="left:466px;top:446.5px;">19:51:27:6  查询完毕，本次查询共用时:748毫秒。</div>
<div class="t log" style="left:466px;top:463.5px;">19:50:59:3  获取到:789个CDN,开始智能测速中...</div>
<div class="t log" style="left:466px;top:480.5px;">19:50:58:4  您还没有绑定微信通知，建议绑定微信通知，接受消息。</div>
<div class="t log" style="left:466px;top:497.5px;">19:50:58:3  链接12306服务器速度:183毫秒[优]</div>
<div class="t log" style="left:466px;top:514.5px;">19:50:57:8  正在初始化...已完成</div>
<div class="t log" style="left:466px;top:531.5px;">19:49:08:2  [设置完毕]已同步时间</div>
<div class="t log" style="left:466px;top:548.5px;">19:49:08:2  [本地时间]：2021-12-30 21:42:50</div>
<div class="t log" style="left:466px;top:565.5px;">19:49:08:2  [服务器-1]：2021-12-31 19:49:08</div>
<div class="t log" style="left:466px;top:582.5px;">21:42:49:9  正在从[1]号服务器获取时间...</div>
<div class="a " style="left:853px;top:445px;width:16px;height:217px;background:#f0f0f0"></div>
<svg class="a" style="left:856px;top:451px" width="9" height="6" viewBox="0 0 9 6"><path d="M1.6 4.8 L4.5 1.7 L7.4 4.8" fill="none" stroke="#bfbfbf" stroke-width="1.9"/></svg>
<svg class="a" style="left:856px;top:650px" width="9" height="6" viewBox="0 0 9 6"><path d="M1.6 1.2 L4.5 4.3 L7.4 1.2" fill="none" stroke="#bfbfbf" stroke-width="1.9"/></svg>
<div class="a " style="left:885px;top:435px;width:165px;height:176px;border:1px solid #dcdcdc"></div>
<div class="a " style="left:892px;top:428px;width:40px;height:16px;background:#fff"></div>
<div class="t " style="left:895px;top:428px;">设置区</div>
<div class="cb" style="left:891px;top:454.5px"></div>
<div class="t " style="left:908px;top:452px;">定时抢票</div>
<div class="cb" style="left:891px;top:482.5px"></div>
<div class="t " style="left:908px;top:480px;">修改间隔</div>
<div class="cb" style="left:891px;top:510.5px"><svg class="ck" width="11" height="11" viewBox="0 0 11 11"><path d="M2.2 6 L4.7 8.5 L9 3.2" fill="none" stroke="#000" stroke-width="2"/></svg></div>
<div class="t " style="left:908px;top:508px;">小黑屋</div>
<div class="cb" style="left:891px;top:537.5px"><svg class="ck" width="11" height="11" viewBox="0 0 11 11"><path d="M2.2 6 L4.7 8.5 L9 3.2" fill="none" stroke="#000" stroke-width="2"/></svg></div>
<div class="t " style="left:908px;top:535px;">全国CDN</div>
<div class="cb" style="left:891px;top:564.5px"></div>
<div class="t " style="left:908px;top:562px;">实时余票无座时,不提交</div>
<div class="cb" style="left:891px;top:591.5px"></div>
<div class="t " style="left:908px;top:589px;">余票不足乘客时,部分提交</div>
<div class="a " style="left:969px;top:448px;width:72px;height:23px;border:1px solid #5a5a5a;background:#fff"></div>
<div class="t " style="left:972px;top:452px;">05:00:00</div>
<svg class="a" style="left:1023px;top:450px" width="15" height="19" viewBox="0 0 15 19"><rect x="0.5" y="0.5" width="14" height="8" fill="#f0f0f0" stroke="#d0d0d0"/><rect x="0.5" y="10.5" width="14" height="8" fill="#f0f0f0" stroke="#d0d0d0"/><path d="M4.5 6.3 L7.5 3 L10.5 6.3 Z M4.5 12.7 L7.5 16 L10.5 12.7 Z" fill="#222"/></svg>
<div class="a " style="left:969px;top:477px;width:72px;height:23px;border:1px solid #c0c0c0;background:#f0f0f0"></div>
<div class="t " style="left:972px;top:480px;color:#7c7c7c">1000</div>
<svg class="a" style="left:1025px;top:479px" width="14" height="19" viewBox="0 0 14 19"><rect x="0.5" y="0.5" width="13" height="8" fill="#f0f0f0" stroke="#dadada"/><rect x="0.5" y="10.5" width="13" height="8" fill="#f0f0f0" stroke="#dadada"/><path d="M4.0 6.3 L7.0 3 L10.0 6.3 Z M4.0 12.7 L7.0 16 L10.0 12.7 Z" fill="#8c8c8c"/></svg>
<div class="a " style="left:969px;top:503px;width:72px;height:23px;border:1px solid #b0b0b0;background:#fff"></div>
<div class="t " style="left:972px;top:506px;">120</div>
<svg class="a" style="left:1025px;top:505px" width="14" height="19" viewBox="0 0 14 19"><rect x="0.5" y="0.5" width="13" height="8" fill="#f0f0f0" stroke="#a8a8a8"/><rect x="0.5" y="10.5" width="13" height="8" fill="#f0f0f0" stroke="#a8a8a8"/><path d="M4.0 6.3 L7.0 3 L10.0 6.3 Z M4.0 12.7 L7.0 16 L10.0 12.7 Z" fill="#222"/></svg>
<div class="t b" style="left:970.5px;top:535px;color:#5a5a5a;letter-spacing:0.4px">可用：<b>150</b></div>
<div class="a " style="left:886px;top:619px;width:163px;height:45px;border:1px solid #adadad;background:#e1e1e1"></div>
<div class="t b" style="left:941px;top:634px;color:#1e90ff;font-size:13px">开始抢票</div>
<div class="a " style="left:4px;top:686px;width:1067px;height:1px;background:#d7d7d7"></div>
<div class="a " style="left:4px;top:687px;width:1067px;height:20px;background:#f0f0f0"></div>
<svg class="a" style="left:5px;top:690px" width="14" height="14" viewBox="0 0 14 14"><circle cx="7" cy="7" r="5.6" fill="none" stroke="#000" stroke-width="1.2"/><path d="M7 6 V10" stroke="#555" stroke-width="1.4"/><circle cx="7" cy="4" r="0.8" fill="#888"/></svg>
<div class="t " style="left:23px;top:689.5px;color:#2f4f4f;letter-spacing:0.15px">当前账号:[宋国印]【免费用户】</div>
<div class="a " style="left:195px;top:690px;width:1px;height:16px;background:#bdbdbd"></div>
<svg class="a" style="left:201px;top:691px" width="13" height="13" viewBox="0 0 13 13"><rect x="0.7" y="0.9" width="11" height="10.6" rx="1.6" fill="none" stroke="#333" stroke-width="1.3"/><path d="M8.6 3.6 L4.8 7.2 M4.6 4.4 V7.4 H7.8" stroke="#222" stroke-width="1.3" fill="none"/><rect x="1" y="8.2" width="3" height="3" fill="#444"/></svg>
<div class="t " style="left:218.5px;top:689.5px;color:#2f4f4f">推送</div>
<div class="a " style="left:247px;top:690px;width:1px;height:16px;background:#bdbdbd"></div>
<svg class="a" style="left:252px;top:690px" width="15" height="14" viewBox="0 0 15 14"><g transform="rotate(-40 7.3 7)"><rect x="0.8" y="4.2" width="13" height="5.6" rx="1.3" fill="none" stroke="#222" stroke-width="1.2"/><path d="M1.4 4.6 V9.4 M4.4 4.4 V9.6" stroke="#222" stroke-width="1.2"/></g></svg>
<div class="t " style="left:270px;top:689.5px;color:#2f4f4f">进度:</div>
<div class="a " style="left:303px;top:689px;width:100px;height:16px;background:#e6e6e6;border:1px solid #bcbcbc"></div>
<div class="t st" style="left:602px;top:690px;color:#8b4513">最新动态：王*在19:49:58抢到了2022-01-14,上海南-贵阳,K495车次,¥229.(</div>
<svg class="a" style="left:1016px;top:691px" width="13" height="12" viewBox="0 0 13 12" fill="none" stroke="#333" stroke-width="1.1"><path d="M0.8 4 Q6.5 -1.4 12.2 4 M2.8 6.2 Q6.5 2.6 10.2 6.2 M4.6 8.2 Q6.5 6.4 8.4 8.2"/><circle cx="6.5" cy="10" r="0.9" fill="#333" stroke="none"/></svg>
<div class="t " style="left:1034px;top:690px;color:#2b6cb0">[优]</div>
<div class="a " style="left:1067px;top:695px;width:2px;height:2px;background:#9a9a9a"></div>
<div class="a " style="left:1063px;top:699px;width:2px;height:2px;background:#9a9a9a"></div>
<div class="a " style="left:1067px;top:699px;width:2px;height:2px;background:#9a9a9a"></div>
<div class="a " style="left:1059px;top:703px;width:2px;height:2px;background:#9a9a9a"></div>
<div class="a " style="left:1063px;top:703px;width:2px;height:2px;background:#9a9a9a"></div>
<div class="a " style="left:1067px;top:703px;width:2px;height:2px;background:#9a9a9a"></div>
</body></html>
